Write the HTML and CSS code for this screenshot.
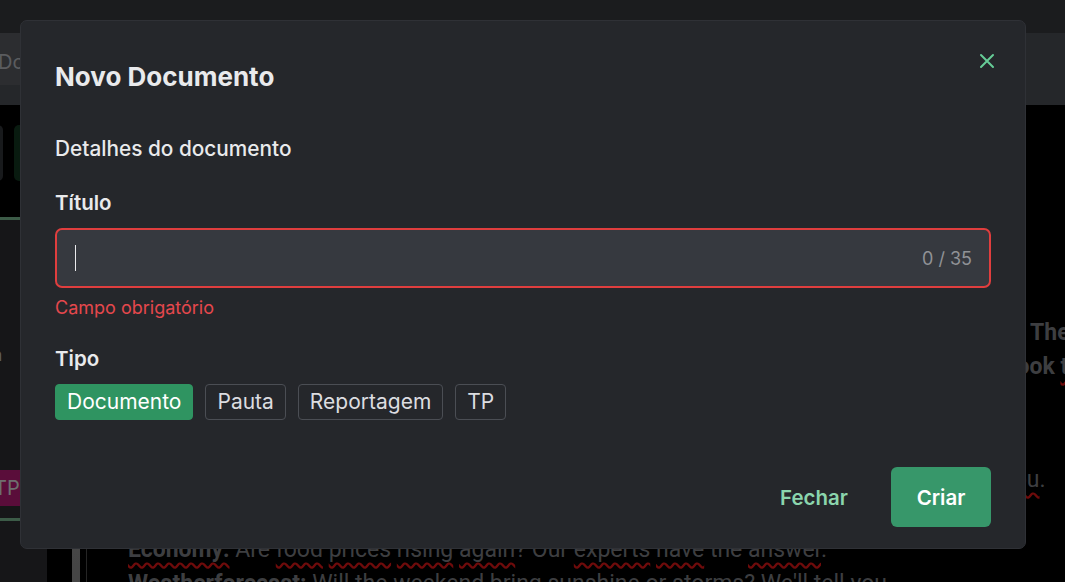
FILE: index.html
```html
<!doctype html>
<html lang="pt">
<head>
    <meta charset="UTF-8">
    <meta name="viewport" content="width=device-width, initial-scale=1.0">
    <title>Novo Documento</title>
    <link rel="stylesheet" href="styles.css">
</head>
<body>
    <div class="app">
        <div class="topbar"></div>
        <div class="header">
            <div class="search">Documentos</div>
        </div>
        <div class="main">
            <div class="sidebar">
                <div class="side-tools">
                    <span class="tool tool-gray"></span>
                    <span class="tool tool-green"></span>
                </div>
                <div class="side-line"></div>
                <div class="side-text">Sem título n</div>
                <div class="side-badge">TP</div>
                <div class="side-line"></div>
            </div>
            <div class="gutter"><span class="scroll"></span></div>
            <div class="editor">
                <p class="far"><b>The</b></p>
                <p class="far-look"><b>Look <span class="sp">to</span></b></p>
                <p class="far-you"><span class="sp">you</span>.</p>
                <p class="line-eco"><b class="sp">Economy:</b> Are <span class="sp">food</span> <span class="sp">prices</span> <span class="sp">rising</span> <span class="sp">again</span>? Our <span class="sp">experts</span> <span class="sp">have</span> the <span class="sp">answer</span>.</p>
                <p><b class="sp">Weatherforecast:</b> Will the <span class="sp">weekend</span> <span class="sp">bring</span> <span class="sp">sunshine</span> or <span class="sp">storms</span>? We'll tell you</p>
            </div>
        </div>
    </div>

    <div class="overlay"></div>

    <div class="modal">
        <div class="modal-head">
            <h2>Novo Documento</h2>
            <button class="close" aria-label="Fechar">
                <svg width="16" height="16" viewBox="0 0 16 16"><path d="M2 2 L14 14 M14 2 L2 14" stroke="currentColor" stroke-width="2" stroke-linecap="round"/></svg>
            </button>
        </div>
        <div class="modal-body">
            <div class="section-title">Detalhes do documento</div>
            <div class="label">Título</div>
            <div class="input">
                <span class="caret"></span>
                <span class="count">0 / 35</span>
            </div>
            <div class="error">Campo obrigatório</div>
            <div class="label label-tipo">Tipo</div>
            <div class="chips">
                <span class="chip active">Documento</span>
                <span class="chip">Pauta</span>
                <span class="chip">Reportagem</span>
                <span class="chip">TP</span>
            </div>
        </div>
        <div class="modal-foot">
            <button class="btn-text">Fechar</button>
            <button class="btn-primary">Criar</button>
        </div>
    </div>
</body>
</html>
```

FILE: styles.css
```css
* {
    margin: 0;
    padding: 0;
    box-sizing: border-box;
}
body {
    width: 1065px;
    height: 582px;
    overflow: hidden;
    background-color: #000;
    font-family: Inter, "Noto Sans", sans-serif;
}
.app {
    display: flex;
    flex-direction: column;
    height: 582px;
    overflow: hidden;
}
.topbar {
    height: 33px;
    flex-shrink: 0;
    background-color: #2a2b2f;
}
.header {
    height: 72px;
    flex-shrink: 0;
    background-color: #3a3c41;
    padding: 0 200px 20px 0;
    display: flex;
    align-items: stretch;
}
.search {
    width: 300px;
    margin-left: -2px;
    background-color: #44464b;
    color: #8c8e92;
    font-size: 20px;
    line-height: 58px;
}
.main {
    flex: 1;
    min-height: 0;
    display: flex;
    overflow: hidden;
}
.sidebar {
    width: 47px;
    background-color: #222326;
    display: flex;
    flex-direction: column;
    overflow: hidden;
}
.side-tools {
    height: 112px;
    flex-shrink: 0;
    background-color: #000;
    display: flex;
    gap: 11px;
    padding: 20px 0 0 0;
}
.tool {
    display: block;
    flex-shrink: 0;
    width: 40px;
    height: 56px;
    border-radius: 5px;
    margin-left: -37px;
}
.tool-gray {
    background-color: #26282b;
}
.tool-green {
    margin-left: 0;
    background-color: #0e2a1a;
}
.side-line {
    height: 3px;
    flex-shrink: 0;
    background-color: #5c8c6d;
}
.side-text {
    margin: 124px 0 0 -98px;
    color: #8c8e92;
    font-size: 18px;
    white-space: nowrap;
}
.side-badge {
    margin: 105px 0 12px -6px;
    width: 40px;
    height: 36px;
    flex-shrink: 0;
    background-color: #8a1559;
    color: #aaa;
    font-size: 20px;
    line-height: 36px;
    border-radius: 4px;
}
.gutter {
    width: 40px;
    background-color: #000;
    display: flex;
    justify-content: flex-end;
    padding-right: 6px;
    border-right: 1px solid #3a3a3a;
}
.scroll {
    width: 8px;
    background: linear-gradient(#8a8a8a, #6a6a6a);
}
.editor {
    flex: 1;
    background-color: #000;
    padding: 211px 0 0 41px;
    color: #5f6064;
    font-family: Roboto, "Liberation Sans", sans-serif;
    font-size: 23px;
    line-height: 34px;
    white-space: nowrap;
    overflow: hidden;
}
.far {
    padding-left: 902px;
}
.far-look {
    padding-left: 876px;
}
.far-you {
    padding-left: 875px;
    margin-top: 79px;
}
.line-eco {
    margin-top: 36px;
}
.sp {
    text-decoration: underline wavy #a11;
    text-underline-offset: 5px;
}

.overlay {
    position: fixed;
    inset: 0;
    background-color: rgba(0, 0, 0, 0.35);
}
.modal {
    position: fixed;
    left: 20px;
    top: 20px;
    width: 1006px;
    height: 529px;
    background-color: #25272b;
    border: 1px solid #2f3136;
    border-radius: 7px;
    padding: 40px 34px 21px 34px;
    display: flex;
    flex-direction: column;
    color: #e9eaec;
}
.modal-head h2 {
    font-size: 26px;
    font-weight: 700;
    line-height: 32px;
}
.close {
    position: absolute;
    top: 31px;
    right: 29px;
    width: 18px;
    height: 18px;
    border: 0;
    background: none;
    color: #66cc97;
    display: flex;
    align-items: center;
    justify-content: center;
}
.section-title {
    margin-top: 42px;
    font-size: 20.8px;
    font-weight: 500;
    line-height: 28px;
}
.label {
    margin-top: 26px;
    font-size: 20.5px;
    font-weight: 600;
    line-height: 28px;
}
.input {
    margin-top: 11px;
    height: 60px;
    border: 2px solid #e03e3e;
    border-radius: 7px;
    background-color: #36393f;
    display: flex;
    align-items: center;
    justify-content: space-between;
    padding: 0 17px 0 18px;
}
.caret {
    width: 1px;
    height: 26px;
    background-color: #e9eaec;
}
.count {
    color: #909296;
    font-size: 18px;
}
.error {
    margin-top: 8px;
    color: #e5484d;
    font-size: 18px;
    line-height: 24px;
}
.label-tipo {
    margin-top: 25px;
}
.chips {
    margin-top: 11px;
    display: flex;
    gap: 12px;
}
.chip {
    height: 36px;
    padding: 0 11px;
    border: 1px solid #4b4e54;
    border-radius: 4px;
    font-size: 21px;
    line-height: 34px;
    color: #dcdde0;
}
.chip.active {
    background-color: #2f9461;
    border-color: #2f9461;
    color: #fff;
}
.modal-foot {
    margin-top: auto;
    display: flex;
    justify-content: flex-end;
    gap: 27px;
}
.modal-foot button {
    font-family: Inter, "Noto Sans", sans-serif;
    font-size: 20.5px;
    font-weight: 600;
    height: 60px;
    border: 0;
    border-radius: 6px;
}
.btn-text {
    width: 100px;
    background: none;
    color: #8bd5ad;
}
.btn-primary {
    width: 100px;
    background-color: #37976a;
    color: #fff;
}
```
